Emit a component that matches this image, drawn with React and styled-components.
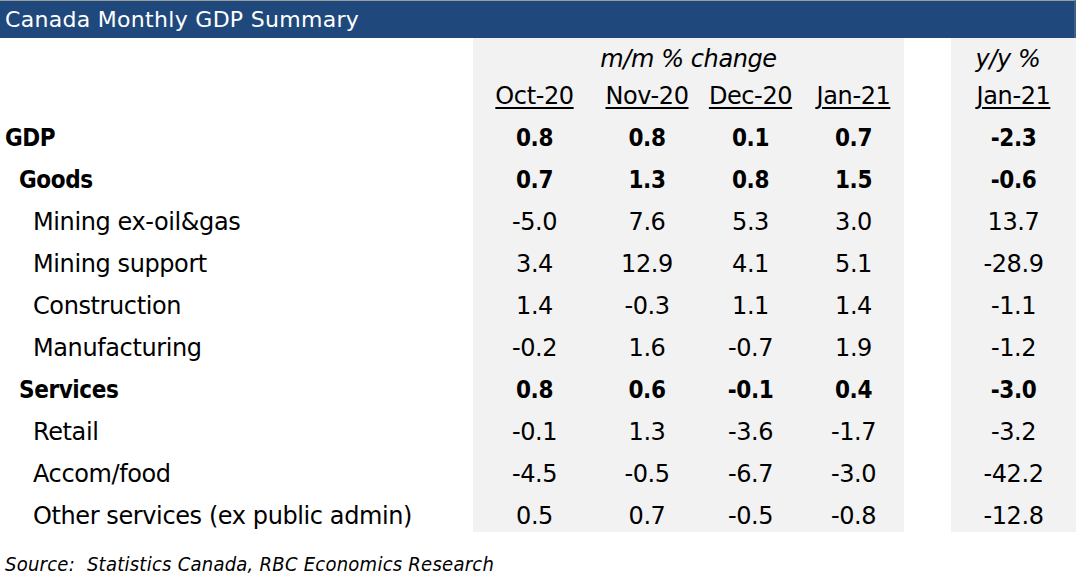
import React from "react";
import styled, { createGlobalStyle } from "styled-components";

const Global = createGlobalStyle`
  html, body { margin: 0; padding: 0; background: #ffffff; }
  body {
    width: 1076px;
    height: 580px;
    overflow: hidden;
    font-family: "DejaVu Sans", sans-serif;
    color: #000;
  }
`;

const Page = styled.div`
  width: 1076px;
  display: flex;
  flex-direction: column;
`;

const TitleBar = styled.div`
  border-top: 1px solid #9d9d9d;
  border-right: 2px solid #3d5f8a;
  background: #1f497d;
  color: #ffffff;
  font-family: "DejaVu Sans", sans-serif;
  font-size: 22px;
  line-height: 22px;
  letter-spacing: 0.3px;
  padding: 0 0 7px 5px;
  box-sizing: border-box;
  height: 38px;
  display: flex;
  align-items: flex-end;
`;

const Grid = styled.div`
  display: grid;
  grid-template-columns: 473px 123px 102px 105px 101px 47px 125px;
  grid-template-rows: 37px 37px repeat(10, 42px);
`;

const Cell = styled.div`
  display: flex;
  align-items: flex-end;
  box-sizing: border-box;
  padding-bottom: 4px;
  font-family: ${(p) =>
    p.$bold
      ? '"DejaVu Sans Condensed", "DejaVu Sans", sans-serif'
      : '"DejaVu Sans", sans-serif'};
  font-size: 24px;
  line-height: 24px;
  letter-spacing: -0.4px;
  white-space: nowrap;
  background: ${(p) => (p.$shaded ? "#f2f2f2" : "transparent")};
  font-weight: ${(p) => (p.$bold ? 700 : 400)};
`;

const Label = styled(Cell)`
  padding-left: ${(p) => [5, 19, 33][p.$level]}px;
`;

const Num = styled(Cell)`
  justify-content: center;
`;

const GroupHead = styled(Cell)`
  justify-content: center;
  font-style: italic;
  grid-column: ${(p) => p.$span};
  padding-right: ${(p) => p.$trim || 0}px;
`;

const DateHead = styled(Cell)`
  justify-content: center;
  & > span {
    text-decoration: underline;
    text-decoration-thickness: 2px;
    text-underline-offset: 3px;
  }
`;

const Source = styled.div`
  font-family: "DejaVu Sans Condensed", "DejaVu Sans", sans-serif;
  font-size: 20px;
  font-style: italic;
  letter-spacing: 0.25px;
  padding: 21px 0 0 5px;
  line-height: 22px;
  white-space: pre;
`;

const rows = [
  { label: "GDP", level: 0, bold: true, m: ["0.8", "0.8", "0.1", "0.7"], y: "-2.3" },
  { label: "Goods", level: 1, bold: true, m: ["0.7", "1.3", "0.8", "1.5"], y: "-0.6" },
  { label: "Mining ex-oil&gas", level: 2, m: ["-5.0", "7.6", "5.3", "3.0"], y: "13.7" },
  { label: "Mining support", level: 2, m: ["3.4", "12.9", "4.1", "5.1"], y: "-28.9" },
  { label: "Construction", level: 2, m: ["1.4", "-0.3", "1.1", "1.4"], y: "-1.1" },
  { label: "Manufacturing", level: 2, m: ["-0.2", "1.6", "-0.7", "1.9"], y: "-1.2" },
  { label: "Services", level: 1, bold: true, m: ["0.8", "0.6", "-0.1", "0.4"], y: "-3.0" },
  { label: "Retail", level: 2, m: ["-0.1", "1.3", "-3.6", "-1.7"], y: "-3.2" },
  { label: "Accom/food", level: 2, m: ["-4.5", "-0.5", "-6.7", "-3.0"], y: "-42.2" },
  { label: "Other services (ex public admin)", level: 2, m: ["0.5", "0.7", "-0.5", "-0.8"], y: "-12.8" },
];

const months = ["Oct-20", "Nov-20", "Dec-20", "Jan-21"];

export default function App() {
  return (
    <Page>
      <Global />
      <TitleBar>Canada Monthly GDP Summary</TitleBar>
      <Grid>
        <Cell />
        <GroupHead $shaded $span="2 / 6">m/m % change</GroupHead>
        <Cell />
        <GroupHead $shaded $span="7 / 8" $trim={11}>y/y %</GroupHead>

        <Cell />
        {months.map((m) => (
          <DateHead key={m} $shaded>
            <span>{m}</span>
          </DateHead>
        ))}
        <Cell />
        <DateHead $shaded>
          <span>Jan-21</span>
        </DateHead>

        {rows.map((r) => (
          <React.Fragment key={r.label}>
            <Label $level={r.level} $bold={r.bold}>
              {r.label}
            </Label>
            {r.m.map((v, i) => (
              <Num key={i} $shaded $bold={r.bold}>
                {v}
              </Num>
            ))}
            <Cell />
            <Num $shaded $bold={r.bold}>
              {r.y}
            </Num>
          </React.Fragment>
        ))}
      </Grid>
      <Source>{"Source:  Statistics Canada, RBC Economics Research"}</Source>
    </Page>
  );
}
